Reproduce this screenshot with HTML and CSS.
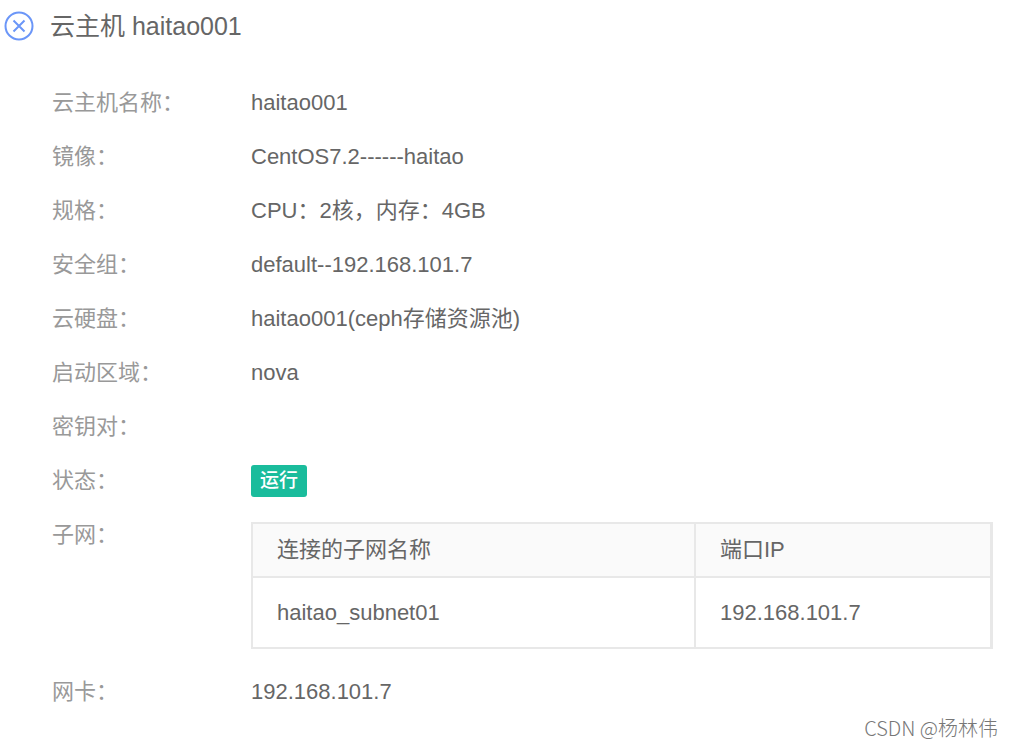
FILE: index.html
```
<!DOCTYPE html>
<html lang="zh-CN">
<head>
    <meta charset="UTF-8">
    <meta name="viewport" content="width=device-width, initial-scale=1.0">
    <title>云主机 haitao001</title>
    <link rel="stylesheet" href="styles.css">
</head>
<body>
    <div class="container">
        <header class="header">
            <button type="button" class="close-btn" aria-label="关闭">
                <svg viewBox="0 0 30 30" width="30" height="30" fill="none" stroke="#6b96f8" stroke-width="2">
                    <circle cx="15" cy="15" r="13.5"/>
                    <path d="M9.5 9.5l11 11M20.5 9.5l-11 11"/>
                </svg>
            </button>
            <h1 class="title">云主机 haitao001</h1>
        </header>
        <dl class="info">
            <div class="info-row">
                <dt>云主机名称：</dt>
                <dd>haitao001</dd>
            </div>
            <div class="info-row">
                <dt>镜像：</dt>
                <dd>CentOS7.2------haitao</dd>
            </div>
            <div class="info-row">
                <dt>规格：</dt>
                <dd>CPU：2核，内存：4GB</dd>
            </div>
            <div class="info-row">
                <dt>安全组：</dt>
                <dd>default--192.168.101.7</dd>
            </div>
            <div class="info-row">
                <dt>云硬盘：</dt>
                <dd>haitao001(ceph存储资源池)</dd>
            </div>
            <div class="info-row">
                <dt>启动区域：</dt>
                <dd>nova</dd>
            </div>
            <div class="info-row">
                <dt>密钥对：</dt>
                <dd></dd>
            </div>
            <div class="info-row">
                <dt>状态：</dt>
                <dd class="status"><span class="badge">运行</span></dd>
            </div>
            <div class="info-row">
                <dt>子网：</dt>
                <dd class="subnet">
                    <table class="subnet-table">
                        <thead>
                            <tr>
                                <th scope="col">连接的子网名称</th>
                                <th scope="col">端口IP</th>
                            </tr>
                        </thead>
                        <tbody>
                            <tr>
                                <td>haitao_subnet01</td>
                                <td>192.168.101.7</td>
                            </tr>
                        </tbody>
                    </table>
                </dd>
            </div>
            <div class="info-row">
                <dt>网卡：</dt>
                <dd>192.168.101.7</dd>
            </div>
        </dl>
    </div>
    <div class="watermark">CSDN @杨林伟</div>
</body>
</html>
```
FILE: styles.css
```
* {
    box-sizing: border-box;
}
body {
    margin: 0;
    font-family: "Liberation Sans", "Noto Sans CJK SC", sans-serif;
    font-size: 22px;
    line-height: 54px;
    color: #666;
    background-color: #fff;
}
.container {
    padding: 0 19px 0 4px;
}
.header {
    display: flex;
    align-items: center;
    gap: 16px;
    height: 52px;
}
.close-btn {
    display: flex;
    padding: 0;
    border: 0;
    background: none;
    cursor: pointer;
}
.title {
    margin: 0;
    font-size: 25px;
    font-weight: normal;
}
.info {
    margin: 24px 0 0;
    padding-left: 48px;
}
.info-row {
    display: grid;
    grid-template-columns: 199px 1fr;
    min-height: 54px;
}
.info-row dt {
    color: #999;
}
.info-row dd {
    margin: 0;
}
.status {
    display: flex;
    align-items: center;
}
.badge {
    padding: 0 9px;
    border-radius: 3px;
    background-color: #1abc9c;
    color: #fff;
    font-size: 19px;
    font-weight: 500;
    line-height: 32px;
}
.info-row .subnet {
    padding: 14px 0 16px;
}
.subnet-table {
    width: 100%;
    table-layout: fixed;
    border-collapse: separate;
    border-spacing: 0;
    border: 2px solid #e8e8e8;
    border-width: 2px 3px 0 2px;
}
.subnet-table th,
.subnet-table td {
    padding: 0 24px;
    border-bottom: 2px solid #e8e8e8;
    font-weight: normal;
    text-align: left;
}
.subnet-table th {
    background-color: #fafafa;
    line-height: 52px;
}
.subnet-table td {
    line-height: 69px;
}
.subnet-table th:last-child {
    width: 294px;
}
.subnet-table th:first-child,
.subnet-table td:first-child {
    border-right: 2px solid #e8e8e8;
}
.watermark {
    position: absolute;
    right: 14px;
    bottom: 3px;
    font-family: "Noto Sans CJK SC", sans-serif;
    font-size: 20px;
    font-weight: 300;
    line-height: 30px;
    color: #777;
}
```
